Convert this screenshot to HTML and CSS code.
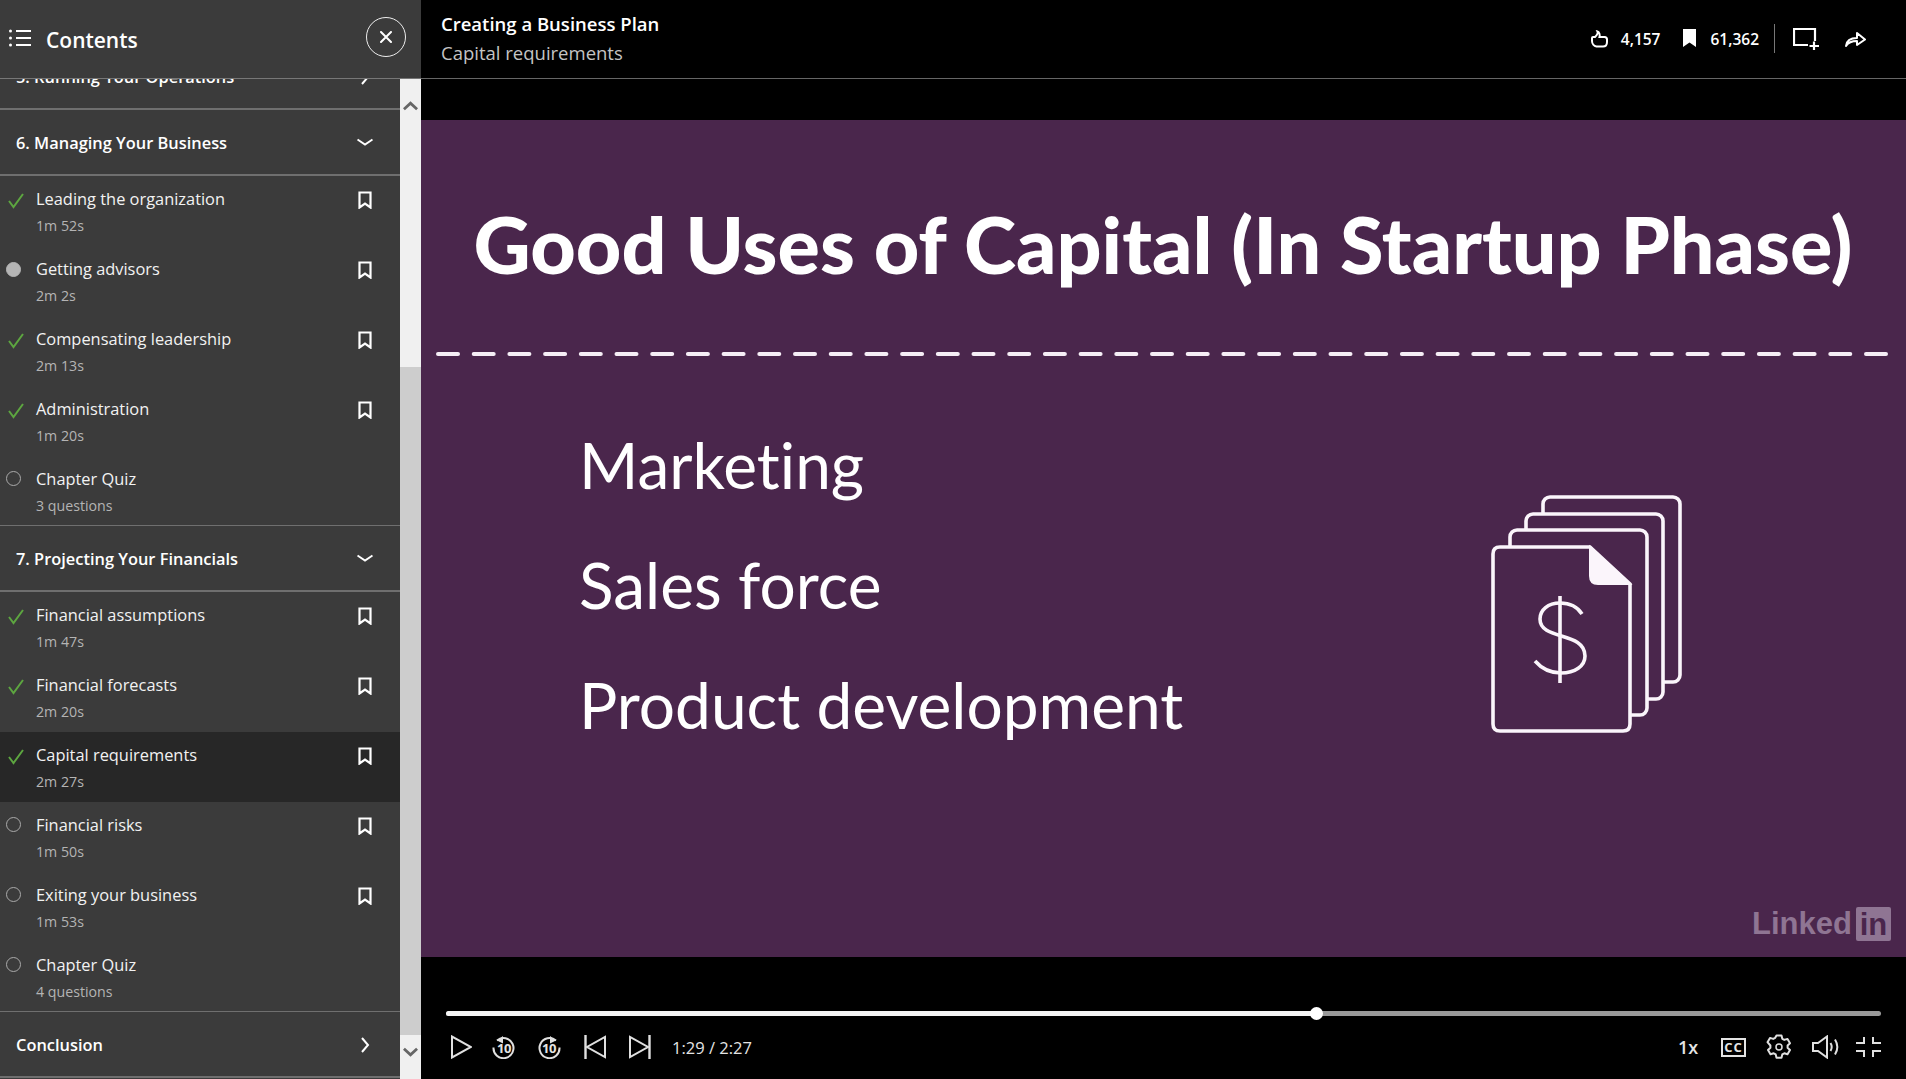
FILE: index.html
```html
<!DOCTYPE html>
<html lang="en">
<head>
<meta charset="utf-8">
<title>Creating a Business Plan</title>
<link rel="stylesheet" href="styles.css">
</head>
<body>
<div class="app">
  <aside class="sidebar">
    <header class="side-head">
      <svg class="list-icon" viewBox="0 0 22 18"><g fill="#fff"><circle cx="1.500" cy="2" r="1.500"/><circle cx="1.500" cy="9" r="1.500"/><circle cx="1.500" cy="16" r="1.500"/></g><path d="M7 2h15M7 9h15M7 16h15" stroke="#fff" stroke-width="1.800" fill="none"/></svg>
      <h2 class="side-title">Contents</h2>
      <span class="close-btn"><svg viewBox="0 0 12 12" class="close-x"><path d="M1 1l10 10M11 1L1 11" stroke="#fff" stroke-width="2" stroke-linecap="round"/></svg></span>
    </header>
    <div class="side-body">
      <div class="toc">
        <div class="toc-inner">
          <div class="sec"><span>5. Running Your Operations</span><svg class="chev" viewBox="0 0 16 16"><path d="M5 1l6 7-6 7" fill="none" stroke="#fff" stroke-width="2"/></svg></div>
          <div class="sec"><span>6. Managing Your Business</span><svg class="chev" viewBox="0 0 16 16"><path d="M0.500 4.500l7.500 5 7.500-5" fill="none" stroke="#fff" stroke-width="2"/></svg></div>
          <div class="items">
            <div class="item"><svg class="st" viewBox="0 0 16 16"><path d="M1 8l4.500 6L15 1" fill="none" stroke="#5da640" stroke-width="2"/></svg><div class="tx"><div class="t">Leading the organization</div><div class="d">1m 52s</div></div><svg class="bm" viewBox="0 0 14 18"><path d="M1.500 1.500h11v15L7 12.500l-5.500 4z" fill="none" stroke="#fff" stroke-width="2.200"/></svg></div>
            <div class="item"><span class="dot fill"></span><div class="tx"><div class="t">Getting advisors</div><div class="d">2m 2s</div></div><svg class="bm" viewBox="0 0 14 18"><path d="M1.500 1.500h11v15L7 12.500l-5.500 4z" fill="none" stroke="#fff" stroke-width="2.200"/></svg></div>
            <div class="item"><svg class="st" viewBox="0 0 16 16"><path d="M1 8l4.500 6L15 1" fill="none" stroke="#5da640" stroke-width="2"/></svg><div class="tx"><div class="t">Compensating leadership</div><div class="d">2m 13s</div></div><svg class="bm" viewBox="0 0 14 18"><path d="M1.500 1.500h11v15L7 12.500l-5.500 4z" fill="none" stroke="#fff" stroke-width="2.200"/></svg></div>
            <div class="item"><svg class="st" viewBox="0 0 16 16"><path d="M1 8l4.500 6L15 1" fill="none" stroke="#5da640" stroke-width="2"/></svg><div class="tx"><div class="t">Administration</div><div class="d">1m 20s</div></div><svg class="bm" viewBox="0 0 14 18"><path d="M1.500 1.500h11v15L7 12.500l-5.500 4z" fill="none" stroke="#fff" stroke-width="2.200"/></svg></div>
            <div class="item"><span class="dot"></span><div class="tx"><div class="t">Chapter Quiz</div><div class="d">3 questions</div></div></div>
          </div>
          <div class="sec"><span>7. Projecting Your Financials</span><svg class="chev" viewBox="0 0 16 16"><path d="M0.500 4.500l7.500 5 7.500-5" fill="none" stroke="#fff" stroke-width="2"/></svg></div>
          <div class="items">
            <div class="item"><svg class="st" viewBox="0 0 16 16"><path d="M1 8l4.500 6L15 1" fill="none" stroke="#5da640" stroke-width="2"/></svg><div class="tx"><div class="t">Financial assumptions</div><div class="d">1m 47s</div></div><svg class="bm" viewBox="0 0 14 18"><path d="M1.500 1.500h11v15L7 12.500l-5.500 4z" fill="none" stroke="#fff" stroke-width="2.200"/></svg></div>
            <div class="item"><svg class="st" viewBox="0 0 16 16"><path d="M1 8l4.500 6L15 1" fill="none" stroke="#5da640" stroke-width="2"/></svg><div class="tx"><div class="t">Financial forecasts</div><div class="d">2m 20s</div></div><svg class="bm" viewBox="0 0 14 18"><path d="M1.500 1.500h11v15L7 12.500l-5.500 4z" fill="none" stroke="#fff" stroke-width="2.200"/></svg></div>
            <div class="item current"><svg class="st" viewBox="0 0 16 16"><path d="M1 8l4.500 6L15 1" fill="none" stroke="#5da640" stroke-width="2"/></svg><div class="tx"><div class="t">Capital requirements</div><div class="d">2m 27s</div></div><svg class="bm" viewBox="0 0 14 18"><path d="M1.500 1.500h11v15L7 12.500l-5.500 4z" fill="none" stroke="#fff" stroke-width="2.200"/></svg></div>
            <div class="item"><span class="dot"></span><div class="tx"><div class="t">Financial risks</div><div class="d">1m 50s</div></div><svg class="bm" viewBox="0 0 14 18"><path d="M1.500 1.500h11v15L7 12.500l-5.500 4z" fill="none" stroke="#fff" stroke-width="2.200"/></svg></div>
            <div class="item"><span class="dot"></span><div class="tx"><div class="t">Exiting your business</div><div class="d">1m 53s</div></div><svg class="bm" viewBox="0 0 14 18"><path d="M1.500 1.500h11v15L7 12.500l-5.500 4z" fill="none" stroke="#fff" stroke-width="2.200"/></svg></div>
            <div class="item"><span class="dot"></span><div class="tx"><div class="t">Chapter Quiz</div><div class="d">4 questions</div></div></div>
          </div>
          <div class="sec"><span>Conclusion</span><svg class="chev" viewBox="0 0 16 16"><path d="M5 1l6 7-6 7" fill="none" stroke="#fff" stroke-width="2"/></svg></div>
        </div>
      </div>
      <div class="scroll">
        <svg class="arrow up" viewBox="0 0 16 10"><path d="M1 8.500l7-6.500 7 6.500" fill="none" stroke="#666" stroke-width="3"/></svg>
        <div class="thumb"></div>
        <svg class="arrow" viewBox="0 0 16 10"><path d="M1 1.500l7 6.500 7-6.500" fill="none" stroke="#666" stroke-width="3"/></svg>
      </div>
    </div>
  </aside>
  <main class="main">
    <header class="top">
      <div class="course">
        <div class="c-title">Creating a Business Plan</div>
        <div class="c-sub">Capital requirements</div>
      </div>
      <div class="stats">
        <svg class="i-thumb" viewBox="0 0 17 18"><path d="M6.500 1.500c1 2-1 4-2.500 5.500H2c-.6 0-1 .4-1 1v3c0 2.500 2 5 4.500 5.500h6.500c2.500 0 4-2 4-4.500V9.500c0-1.200-1-2.500-2.500-2.500H8.500C9 5 8.500 2 6.500 1.500z" fill="none" stroke="#fff" stroke-width="2"/></svg>
        <span class="num n1">4,157</span>
        <svg class="i-mark" viewBox="0 0 13 18"><path d="M0 0h13v18l-6.500-4.500L0 18z" fill="#fff"/></svg>
        <span class="num n2">61,362</span>
        <span class="divider"></span>
        <svg class="i-add" viewBox="0 0 27 24"><path d="M22 14V2H1v16h14" fill="none" stroke="#fff" stroke-width="2.200"/><path d="M21 14.500v8.500M16.500 19H26" stroke="#fff" stroke-width="2.200"/></svg>
        <svg class="i-share" viewBox="0 0 21 17"><path d="M1 16c.5-5 4-8 11-8V3l8 6.500-8 5.500v-4c-5 0-8.500 1-11 5z" fill="none" stroke="#fff" stroke-width="2" stroke-linejoin="round"/></svg>
      </div>
    </header>
    <section class="stage">
      <div class="slide">
        <h1 class="s-title">Good Uses of Capital (In Startup Phase)</h1>
        <svg class="dash" viewBox="0 0 1452 6"><line x1="2" y1="3" x2="1452" y2="3" stroke="#f6eef6" stroke-width="4" stroke-linecap="round" stroke-dasharray="20 15.700"/></svg>
        <div class="s-row">
          <ul class="s-list"><li>Marketing</li><li>Sales force</li><li>Product development</li></ul>
          <svg class="files" viewBox="0 0 192 240"><g fill="#4a264c" stroke="#fbf5fb" stroke-width="3.600"><rect x="53" y="3" width="137" height="185" rx="7"/><rect x="36" y="20" width="137" height="185" rx="7"/><rect x="20" y="36" width="137" height="185" rx="7"/><path d="M10 53h90l40 37v140q0 7-7 7H10q-7 0-7-7V60q0-7 7-7z"/></g><path d="M100 53l40 37h-32q-8 0-8-8z" fill="#fbf5fb" stroke="#fbf5fb" stroke-width="2"/><g fill="none" stroke="#fbf5fb" stroke-width="3.600"><path d="M92 120c-5-8-13-11-22-11-12 0-20 7-20 16 0 22 45 12 45 37 0 10-10 17-24 17-10 0-19-4-26-12"/><path d="M70 102v87"/></g></svg>
        </div>
        <div class="brand"><span class="b-text">Linked</span><span class="b-box">in</span></div>
      </div>
    </section>
    <footer class="controls">
      <div class="bar"><span class="played"></span><span class="knob"></span></div>
      <div class="c-row">
        <svg class="c play" viewBox="0 0 21 24"><path d="M1 1.500v21L20 12z" fill="none" stroke="#e0e0e0" stroke-width="2"/></svg>
        <span class="skip"><svg viewBox="0 0 24 24"><path d="M5 5.500a10 10 0 1 1-3.500 7" fill="none" stroke="#e0e0e0" stroke-width="2"/><path d="M11 1L5 5.500l6 3z" fill="#e0e0e0"/></svg><b>10</b></span>
        <span class="skip"><svg viewBox="0 0 24 24"><path d="M19 5.500a10 10 0 1 0 3.500 7" fill="none" stroke="#e0e0e0" stroke-width="2"/><path d="M13 1l6 4.500-6 3z" fill="#e0e0e0"/></svg><b>10</b></span>
        <svg class="c step" viewBox="0 0 22 24"><path d="M21 2v20L3 12z" fill="none" stroke="#e0e0e0" stroke-width="2"/><path d="M1.500 0v24" stroke="#e0e0e0" stroke-width="2.400"/></svg>
        <svg class="c step next" viewBox="0 0 22 24"><path d="M1 2v20l18-10z" fill="none" stroke="#e0e0e0" stroke-width="2"/><path d="M20.500 0v24" stroke="#e0e0e0" stroke-width="2.400"/></svg>
        <span class="time">1:29 / 2:27</span>
        <span class="speed">1x</span>
        <span class="cc">CC</span>
        <svg class="c gear" viewBox="0 0 26 26"><path d="M10.500 1.500h5l.8 3.300 2 1.100 3.200-1 2.500 4.300-2.400 2.300v2.200l2.400 2.300-2.500 4.300-3.200-1-2 1.100-.8 3.300h-5l-.8-3.300-2-1.100-3.200 1-2.500-4.300 2.400-2.300v-2.200L1.500 8.200 4 3.900l3.200 1 2-1.100z" fill="none" stroke="#e0e0e0" stroke-width="2" stroke-linejoin="round"/><circle cx="13" cy="13" r="3" fill="none" stroke="#e0e0e0" stroke-width="1.500"/></svg>
        <svg class="c vol" viewBox="0 0 27 24"><path d="M1 8v8h5l9 6.500v-21L6 8z" fill="none" stroke="#e0e0e0" stroke-width="2"/><path d="M18.500 8c1.500 2.500 1.500 5.500 0 8M23 4.500c2.800 4.500 2.800 10.500 0 15" fill="none" stroke="#e0e0e0" stroke-width="2"/></svg>
        <svg class="c fs" viewBox="0 0 25 20"><path d="M0 6h8V0M17 0v6h8M0 14h8v6M25 14h-8v6" fill="none" stroke="#e0e0e0" stroke-width="2"/></svg>
      </div>
    </footer>
  </main>
</div>
</body>
</html>
```
FILE: styles.css
```css
* { box-sizing: border-box; }
html, body { margin: 0; height: 100%; }
body { background: #000; color: #fff; font-family: "Open Sans", "Noto Sans", sans-serif; overflow: hidden; }
.app { display: grid; grid-template-columns: 421px 1fr; height: 1079px; }

.sidebar { display: flex; flex-direction: column; background: #3b3b3b; min-height: 0; }
.side-head { height: 79px; flex: none; display: flex; align-items: center; padding: 0 15px 0 9px; border-bottom: 1px solid #777; }
.list-icon { width: 22px; height: 18px; margin-right: 15px; margin-top: -2px; }
.side-title { margin: 2px 0 0; font-size: 21px; font-weight: 600; flex: 1; }
.close-btn { width: 40px; height: 40px; border: 1.500px solid #eee; border-radius: 50%; display: flex; align-items: center; justify-content: center; margin-top: -4px; }
.close-x { width: 12px; height: 12px; }

.side-body { flex: 1; display: flex; min-height: 0; }
.toc { width: 400px; overflow: hidden; }
.toc-inner { margin-top: -35px; }
.sec { height: 66px; display: flex; align-items: center; justify-content: space-between; padding: 1px 27px 0 16px; border-bottom: 2px solid #6f6f6f; font-size: 16.400px; font-weight: 600; }
.chev { width: 16px; height: 16px; margin-top: 0; }
.items { display: block; }
.item { height: 70px; display: flex; align-items: flex-start; padding-top: 12px; position: relative; }
.items .item:last-child { border-bottom: 1px solid #6f6f6f; }
.item.current { background: #272727; }
.st { width: 16px; height: 16px; flex: none; margin: 5px 12px 0 8px; }
.dot { width: 15px; height: 15px; flex: none; border-radius: 50%; border: 1.500px solid #aaa; margin: 3px 15px 0 6px; }
.dot.fill { background: #b5b5b5; border-color: #b5b5b5; margin-top: 4px; }
.tx { flex: 1; }
.t { font-size: 16.400px; line-height: 22px; color: #f2f2f2; }
.d { font-size: 14.200px; line-height: 22px; margin-top: 5px; color: #b4b4b4; }
.bm { width: 14px; height: 18px; flex: none; margin: 3px 28px 0 0; }

.scroll { width: 21px; background: #f0f0f0; display: flex; flex-direction: column; align-items: center; }
.arrow { width: 15px; height: 10px; flex: none; margin: 12px 0 22px; }
.arrow.up { margin: 22px 0 0; }
.thumb { width: 100%; flex: 1; margin-top: 256px; background: #cdcdcd; }

.main { display: flex; flex-direction: column; min-width: 0; }
.top { height: 79px; flex: none; display: flex; justify-content: space-between; align-items: flex-start; border-bottom: 1px solid #666; padding: 12px 40px 0 20px; }
.c-title { font-size: 18.500px; font-weight: 600; line-height: 26px; margin-top: -1px; }
.c-sub { font-size: 18.500px; line-height: 26px; margin-top: 3px; color: #c4c4c4; }
.stats { display: flex; align-items: center; height: 29px; margin-top: 12px; }
.i-thumb { width: 17px; height: 18px; }
.num { font-size: 15.500px; font-weight: 600; }
.n1 { margin: 0 23px 0 13px; }
.i-mark { width: 13px; height: 18px; margin-top: -1px; }
.n2 { margin: 0 15px 0 14px; }
.divider { width: 1px; height: 29px; background: #777; }
.i-add { width: 27px; height: 24px; margin: 0 25px 0 18px; }
.i-share { width: 21px; height: 17px; }

.stage { flex: none; height: 878px; padding-top: 41px; }
.slide { height: 837px; background: #4a264c; position: relative; padding: 0 16px 0 15px; color: #fff; font-family: Lato, "Open Sans", sans-serif; font-variant-ligatures: none; }
.s-title { margin: 0; padding-top: 76px; height: 180px; text-align: center; font-size: 79px; line-height: 96px; font-weight: 900; white-space: nowrap; }
.dash { display: block; width: 1452px; height: 6px; margin-top: 51px; }
.s-row { display: flex; padding: 0 0 0 143px; margin-top: 67px; }
.s-list { list-style: none; margin: 0; padding: 0; flex: 1; font-size: 64px; font-weight: 400; }
.s-list li { height: 120px; line-height: 82px; }
.files { width: 192px; height: 240px; flex: none; margin: 70px 208px 0 0; }
.brand { position: absolute; left: 1331px; top: 787px; display: flex; align-items: center; color: #8f7593; font-family: "Liberation Sans", sans-serif; font-weight: 700; }
.b-text { font-size: 31px; line-height: 34px; }
.b-box { width: 35px; height: 34px; margin-left: 4px; background: #8f7593; color: #4a264c; border-radius: 2px; text-align: center; font-size: 31px; line-height: 36px; }

.controls { flex: 1; position: relative; padding: 0 25px; }
.bar { height: 5px; margin-top: 54px; background: #999; border-radius: 3px; position: relative; }
.played { display: block; height: 100%; width: 870px; background: #f4f4f4; border-radius: 3px 0 0 3px; }
.knob { position: absolute; left: 864px; top: -4px; width: 13px; height: 13px; border-radius: 50%; background: #fff; }
.c-row { display: flex; align-items: center; height: 32px; margin-top: 15px; color: #e4e4e4; font-size: 16.500px; }
.c { flex: none; }
.play { width: 21px; height: 24px; margin: 0 0 0 5px; }
.skip { position: relative; width: 24px; height: 24px; margin-left: 20px; flex: none; display: block; }
.skip + .skip { margin-left: 21px; }
.skip svg { width: 24px; height: 24px; display: block; }
.skip b { position: absolute; left: 0; right: 0; top: 5px; text-align: center; font-size: 13px; line-height: 16px; font-weight: 700; letter-spacing: -.5px; color: #e4e4e4; }
.step { width: 22px; height: 24px; margin-left: 23px; }
.next { margin-left: 23px; }
.time { margin-left: 21px; flex: 1; }
.speed { font-size: 18px; font-weight: 600; width: 43px; }
.cc { width: 25px; height: 19px; border: 2.200px solid #e4e4e4; font-size: 13px; line-height: 14px; font-weight: 700; letter-spacing: 1px; text-align: center; flex: none; }
.gear { width: 26px; height: 26px; margin-left: 20px; }
.vol { width: 27px; height: 24px; margin-left: 20px; }
.fs { width: 25px; height: 20px; margin-left: 17px; }
```
